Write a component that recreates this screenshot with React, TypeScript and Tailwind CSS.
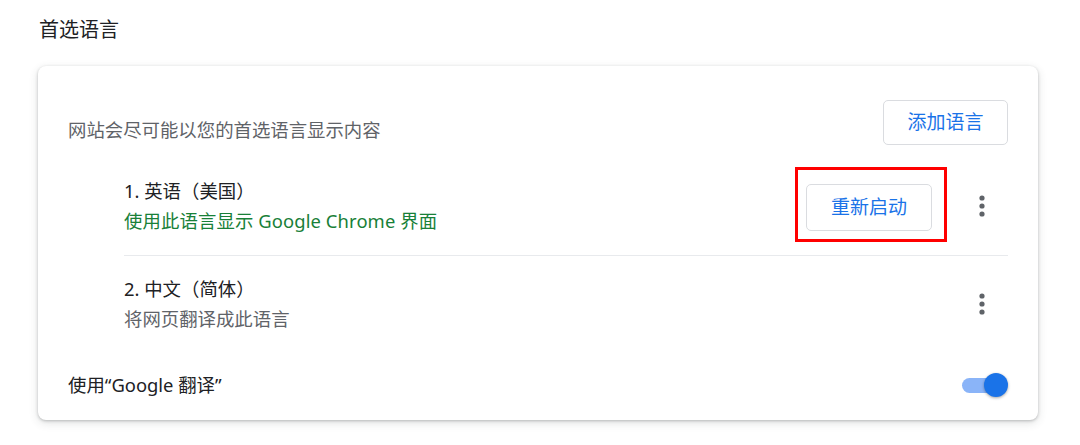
import React from "react";

const font = { fontFamily: '"Noto Sans", "Noto Sans CJK SC", sans-serif' };

const MoreIcon = () => (
  <svg width="8" height="24" viewBox="0 0 8 24" fill="#5f6368">
    <circle cx="4" cy="4" r="2.6" />
    <circle cx="4" cy="12" r="2.6" />
    <circle cx="4" cy="20" r="2.6" />
  </svg>
);

const Toggle = () => (
  <div className="relative w-[46px] h-[24px] flex items-center">
    <div className="w-[40px] h-[15px] rounded-full bg-[#8ab4f8]" />
    <div className="absolute right-0 top-0 w-[24px] h-[24px] rounded-full bg-[#1a73e8] shadow-[0_1px_3px_rgba(0,0,0,0.35)]" />
  </div>
);

export default function App() {
  return (
    <div className="w-[1080px] h-[445px] bg-white overflow-hidden" style={font}>
      <h1 className="pl-[39px] pt-[16px] h-[66px] text-[20px] leading-[28px] text-[#202124]">首选语言</h1>

      <div className="ml-[38px] w-[1000px] h-[354px] rounded-[8px] bg-white shadow-[0_1px_3px_rgba(60,64,67,0.3),0_3px_8px_1px_rgba(60,64,67,0.12)] px-[30px] pt-[34px]">
        <div className="flex items-end justify-between h-[45px]">
          <p className="text-[18.4px] leading-[28px] text-[#5f6368] mb-[1px]">网站会尽可能以您的首选语言显示内容</p>
          <button className="w-[125px] h-[45px] rounded-[5px] border border-[#dadce0] text-[#1a73e8] text-[19px]">
            添加语言
          </button>
        </div>

        <div className="ml-[56px] border-b border-[#e8eaed] pt-[22px] pb-[13px] flex items-center">
          <div className="flex-1 text-[18.4px] leading-[30px] pt-[2px]">
            <div className="text-[#202124]">1. 英语（美国）</div>
            <div className="text-[#188038] tracking-[0.1px]">使用此语言显示 Google Chrome 界面</div>
          </div>
          <div className="border-[3px] border-[#ff0000] pl-[8px] pr-[12px] pt-[14px] pb-[8px]">
            <button className="w-[126px] h-[47px] rounded-[5px] border border-[#dadce0] text-[#1a73e8] text-[19px]">
              重新启动
            </button>
          </div>
          <div className="ml-[9px] w-[52px] flex justify-center pt-[2px]">
            <MoreIcon />
          </div>
        </div>

        <div className="ml-[56px] pt-[18px] flex items-center">
          <div className="flex-1 text-[18.4px] leading-[30px]">
            <div className="text-[#202124]">2. 中文（简体）</div>
            <div className="text-[#5f6368]">将网页翻译成此语言</div>
          </div>
          <div className="w-[52px] flex justify-center">
            <MoreIcon />
          </div>
        </div>

        <div className="mt-[33px] flex items-center justify-between h-[36px]">
          <p className="text-[18.4px] text-[#202124]">使用“Google 翻译”</p>
          <Toggle />
        </div>
      </div>
    </div>
  );
}
